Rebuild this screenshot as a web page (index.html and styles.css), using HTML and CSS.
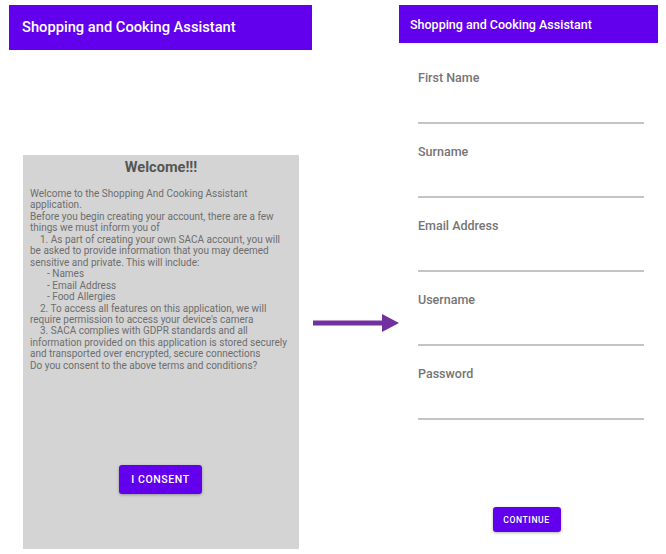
FILE: index.html
```html
<!DOCTYPE html>
<html>
<head>
<meta charset="utf-8">
<link rel="stylesheet" href="styles.css">
</head>
<body>
<div class="page">
  <section class="screen left">
    <header class="bar bar-left">Shopping and Cooking Assistant</header>
    <div class="card">
      <h1 class="title">Welcome!!!</h1>
      <div class="terms">
        <div>Welcome to the Shopping And Cooking Assistant</div>
        <div>application.</div>
        <div>Before you begin creating your account, there are a few</div>
        <div>things we must inform you of</div>
        <div class="ind1">1. As part of creating your own SACA account, you will</div>
        <div>be asked to provide information that you may deemed</div>
        <div>sensitive and private. This will include:</div>
        <div class="ind2">- Names</div>
        <div class="ind2">- Email Address</div>
        <div class="ind2">- Food Allergies</div>
        <div class="ind1">2. To access all features on this application, we will</div>
        <div>require permission to access your device's camera</div>
        <div class="ind1">3. SACA complies with GDPR standards and all</div>
        <div>information provided on this application is stored securely</div>
        <div>and transported over encrypted, secure connections</div>
        <div>Do you consent to the above terms and conditions?</div>
      </div>
      <button class="btn btn-consent">I CONSENT</button>
    </div>
  </section>
  <div class="arrow">
    <svg width="86" height="18" viewBox="0 0 86 18">
      <rect x="0" y="6.5" width="70" height="5" fill="#7030a0"/>
      <polygon points="69,0 86,9 69,18" fill="#7030a0"/>
    </svg>
  </div>
  <section class="screen right">
    <header class="bar bar-right">Shopping and Cooking Assistant</header>
    <form class="form">
      <div class="field"><div class="label">First Name</div><div class="line"></div></div>
      <div class="field"><div class="label">Surname</div><div class="line"></div></div>
      <div class="field"><div class="label">Email Address</div><div class="line"></div></div>
      <div class="field"><div class="label">Username</div><div class="line"></div></div>
      <div class="field"><div class="label">Password</div><div class="line"></div></div>
    </form>
    <div class="actions"><button class="btn btn-continue" type="button">CONTINUE</button></div>
  </section>
</div>
</body>
</html>
```
FILE: styles.css
```css
* { box-sizing: border-box; }
html, body { margin: 0; padding: 0; background: #fff; }
body { font-family: Roboto, "Liberation Sans", sans-serif; width: 666px; height: 554px; overflow: hidden; }
.page { display: flex; align-items: flex-start; padding-top: 5px; }
.screen.left { margin-left: 9px; width: 303px; display: flex; flex-direction: column; }
.bar { background: #6200ee; color: #fff; font-weight: 500; display: flex; align-items: center; }
.bar-left { height: 45px; padding-left: 13px; font-size: 14.7px; padding-bottom: 1px; }
.card { margin: 105px 0 0 14px; width: 276px; height: 394px; background: #d4d4d4; display: flex; flex-direction: column; align-items: stretch; }
.title { margin: 0; text-align: center; font-size: 14.6px; font-weight: 700; color: #555; padding-top: 2px; line-height: 20px; }
.terms { margin-top: 11px; padding-left: 7px; font-size: 10px; line-height: 11.45px; color: #6e6e6e; white-space: nowrap; }
.ind1 { padding-left: 10px; }
.ind2 { padding-left: 17px; }
.btn { border: none; background: #6200ee; color: #fff; font-family: Roboto, "Liberation Sans", sans-serif; font-weight: 500; border-radius: 3px; box-shadow: 0 1px 3px rgba(0,0,0,0.3); padding: 0; }
.btn-consent { align-self: flex-start; margin: 94px 0 0 96px; width: 83px; height: 29px; font-size: 10.5px; letter-spacing: 0.6px; }
.arrow { width: 86px; margin-top: 309px; margin-left: 1px; }
.arrow svg { display: block; }
.screen.right { width: 259px; height: 549px; display: flex; flex-direction: column; }
.bar-right { height: 38px; padding-left: 11px; font-size: 12.5px; }
.form { margin: 0; padding: 28px 14px 0 19px; display: flex; flex-direction: column; gap: 0; }
.field { height: 74px; display: flex; flex-direction: column; }
.label { font-size: 12.5px; font-weight: 500; color: #757575; line-height: 14px; }
.line { margin-top: 37px; height: 1.5px; background: #c4c4c4; }
.actions { display: flex; justify-content: center; margin-top: 66px; padding-right: 4px; }
.btn-continue { width: 68px; height: 25px; font-size: 8.6px; letter-spacing: 0.6px; }
```
